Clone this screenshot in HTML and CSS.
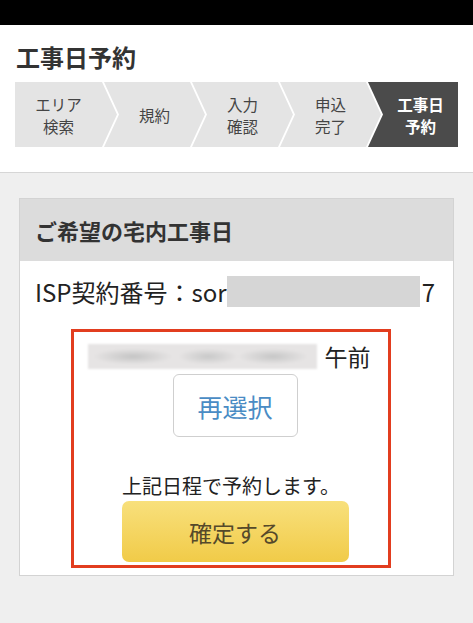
FILE: index.html
```html
<!DOCTYPE html>
<html lang="ja">
<head>
    <meta charset="UTF-8">
    <meta name="viewport" content="width=device-width, initial-scale=1.0">
    <title>工事日予約</title>
    <link rel="stylesheet" href="styles.css">
</head>
<body>
    <div class="statusbar"></div>
    <div class="header">
        <h1>工事日予約</h1>
        <ol class="steps">
            <li class="step first"><span>エリア<br>検索</span></li>
            <li class="step"><span>規約</span></li>
            <li class="step"><span>入力<br>確認</span></li>
            <li class="step"><span>申込<br>完了</span></li>
            <li class="step last active"><span>工事日<br>予約</span></li>
        </ol>
    </div>
    <div class="main">
        <div class="card">
            <div class="card-head">ご希望の宅内工事日</div>
            <div class="card-body">
                <p class="isp">ISP契約番号：sor<span class="mask"></span>7</p>
                <div class="slot">
                    <span class="blur"></span>
                    <span class="ampm">午前</span>
                </div>
                <button type="button" class="btn-reselect">再選択</button>
                <p class="note">上記日程で予約します。</p>
                <button type="submit" class="btn-confirm">確定する</button>
            </div>
            <div class="mark"></div>
        </div>
    </div>
</body>
</html>
```

FILE: styles.css
```css
* {
    box-sizing: border-box;
}
body {
    margin: 0;
    font-family: "Noto Sans CJK JP", "Noto Sans", sans-serif;
    color: #333;
    background: #efefef;
    height: 623px;
    overflow: hidden;
}
.statusbar {
    height: 25px;
    background: #000;
}
.header {
    background: #fff;
    padding: 14px 15px 25px;
    border-bottom: 1px solid #d6d6d6;
}
h1 {
    margin: 0 0 8px 1px;
    font-size: 24px;
    line-height: 35px;
    font-weight: bold;
    color: #333;
}
.steps {
    list-style: none;
    margin: 0;
    padding: 0;
    display: flex;
    height: 65px;
}
.step {
    position: relative;
    flex: 0 0 88px;
    padding-left: 17px;
    display: flex;
    align-items: center;
    justify-content: center;
    text-align: center;
    background: #e4e4e4;
    color: #444;
    font-size: 15.5px;
    line-height: 22px;
}
/* chevron tip + white separator over the next step */
.step::before,
.step::after {
    content: "";
    position: absolute;
    top: 0;
    bottom: 0;
    left: 100%;
    z-index: 1;
}
.step::before {
    width: 17px;
    background: #fff;
    clip-path: polygon(0 0, 2px 0, 17px 50%, 2px 100%, 0 100%);
}
.step::after {
    width: 15px;
    background: #e4e4e4;
    clip-path: polygon(0 0, 15px 50%, 0 100%);
}
.step.first {
    flex-basis: 87px;
    padding-left: 0;
}
.step.last {
    flex: 1;
}
.step.last::before,
.step.last::after {
    display: none;
}
.step.active {
    background: #4b4b4b;
    color: #fff;
    font-weight: bold;
}
.main {
    padding: 25px 19px 0 19px;
}
.card {
    position: relative;
    background: #fff;
    border: 1px solid #d3d3d3;
}
.card-head {
    height: 62px;
    padding: 0 15px;
    display: flex;
    align-items: center;
    background: #dcdcdc;
    font-size: 22px;
    font-weight: bold;
    color: #333;
}
.card-body {
    padding: 14px 18px 13px 15px;
    display: flex;
    flex-direction: column;
    align-items: center;
}
.isp {
    align-self: stretch;
    margin: 0;
    display: flex;
    align-items: center;
    height: 32px;
    font-size: 24px;
    color: #222;
}
.mask {
    flex: 1;
    height: 31px;
    margin: 0 2px 0 0;
    background: #d6d6d6;
}
.slot {
    margin-top: 33px;
    height: 32px;
    display: flex;
    align-items: center;
    gap: 8px;
    margin-left: -12px;
}
.blur {
    width: 229px;
    height: 25px;
    background:
        radial-gradient(ellipse 40px 8px at 45px 50%, #c4c4c4, transparent),
        radial-gradient(ellipse 30px 8px at 120px 50%, #c8c8c8, transparent),
        radial-gradient(ellipse 35px 8px at 185px 50%, #c6c6c6, transparent),
        #e6e4e4;
    filter: blur(1px);
}
.ampm {
    font-size: 23px;
    color: #222;
}
button {
    font-family: inherit;
    cursor: pointer;
}
.btn-reselect {
    margin-top: 2px;
    width: 125px;
    height: 63px;
    background: #fff;
    border: 1px solid #cfcfcf;
    border-radius: 6px;
    color: #4a8cc4;
    font-size: 25px;
}
.note {
    margin: 35px 0 0 -8px;
    font-size: 20px;
    line-height: 28px;
    color: #222;
}
.btn-confirm {
    margin-top: 1px;
    width: 227px;
    height: 61px;
    border: none;
    border-radius: 7px;
    background: linear-gradient(#f8e07c, #f1cb48);
    color: #55492a;
    font-size: 23px;
}
.mark {
    position: absolute;
    top: 130px;
    left: 51px;
    width: 320px;
    height: 239px;
    border: 3px solid #e23d1f;
}
```
